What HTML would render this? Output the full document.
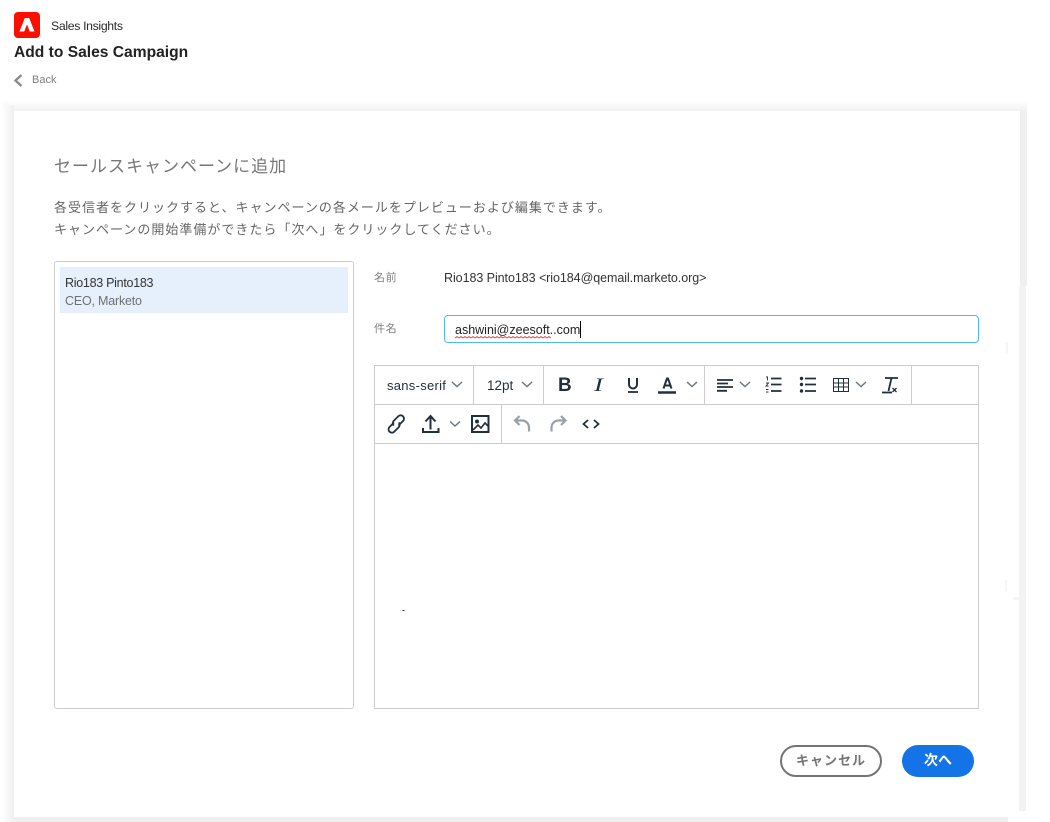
<!DOCTYPE html>
<html><head><meta charset="utf-8">
<style>
html,body{margin:0;padding:0;width:1050px;height:822px;overflow:hidden;background:#fff;font-family:"Liberation Sans","Noto Sans CJK JP",sans-serif}
.a{position:absolute;white-space:nowrap}
svg{position:absolute;overflow:visible;fill:none}
.ln{position:absolute;background:#ccc}
</style></head><body>
<!-- card shadow -->
<div class="a" style="left:2px;top:101px;width:1025px;height:10px;background:linear-gradient(#fff,#f1f1f1)"></div>
<div class="a" style="left:2px;top:105px;width:12px;height:717px;background:linear-gradient(90deg,#fff,#efefef)"></div>
<div class="a" style="left:1020px;top:110px;width:7px;height:176px;background:#f0f0f0"></div>
<div class="a" style="left:1019px;top:286px;width:7px;height:525px;background:#f3f3f3"></div>
<div class="a" style="left:14px;top:817px;width:994px;height:5px;background:#f0f0f0"></div>
<div class="a" style="left:1006px;top:342px;width:2px;height:11px;background:#f5f5f5"></div>
<div class="a" style="left:1005px;top:580px;width:2px;height:11px;background:#f5f5f5"></div>
<div class="a" style="left:1013px;top:597px;width:6px;height:3px;background:#f5f5f5"></div>

<!-- header -->
<div class="a" style="left:14px;top:12px;width:26px;height:26px;background:#fa0f00;border-radius:4px"></div>
<svg style="left:14px;top:12px" width="26" height="26"><path fill-rule="evenodd" d="M10.800 6H15.200L20.500 19.500H5.500ZM13 12.500 10.200 19.500H15.800Z" fill="#fff"/></svg>
<div class="a" style="left:51px;top:18px;font-size:12.300px;line-height:16px;color:#2c2c2c;letter-spacing:-.35px">Sales Insights</div>
<div class="a" style="left:14px;top:43px;font-size:15.600px;line-height:20px;font-weight:bold;color:#222">Add to Sales Campaign</div>
<svg style="left:14px;top:74px" width="10" height="13"><path d="M7.500 1 1.500 6.500 7.500 12" stroke="#8a8a8a" stroke-width="2.300"/></svg>
<div class="a" style="left:32px;top:73px;font-size:11px;line-height:14px;color:#7f7f7f">Back</div>

<!-- headings -->
<div class="a" style="left:54px;top:156px;font-size:17px;line-height:22px;color:#777;letter-spacing:1px">セールスキャンペーンに追加</div>
<div class="a" style="left:54px;top:198px;font-size:13px;line-height:20px;color:#666;letter-spacing:1px">各受信者をクリックすると、キャンペーンの各メールをプレビューおよび編集できます。</div>
<div class="a" style="left:54px;top:220px;font-size:13px;line-height:20px;color:#666;letter-spacing:1px">キャンペーンの開始準備ができたら「次へ」をクリックしてください。</div>

<!-- left list -->
<div class="a" style="left:54px;top:261px;width:298px;height:446px;border:1px solid #ccc;border-radius:3px"></div>
<div class="a" style="left:60px;top:267px;width:288px;height:46px;background:#e5f0fc"></div>
<div class="a" style="left:65px;top:275px;font-size:12.500px;line-height:16px;color:#333;letter-spacing:-.28px">Rio183 Pinto183</div>
<div class="a" style="left:65px;top:293px;font-size:12.500px;line-height:16px;color:#707070;letter-spacing:-.2px">CEO, Marketo</div>

<!-- form -->
<div class="a" style="left:374px;top:270px;font-size:11px;line-height:16px;color:#808080;letter-spacing:.6px">名前</div>
<div class="a" style="left:444px;top:270px;font-size:12.500px;line-height:16px;color:#333;letter-spacing:-.06px">Rio183 Pinto183 &lt;rio184@qemail.marketo.org&gt;</div>
<div class="a" style="left:374px;top:321px;font-size:11px;line-height:16px;color:#808080;letter-spacing:.6px">件名</div>
<div class="a" style="left:444px;top:315px;width:533px;height:26px;border:1px solid #4ebbe9;border-radius:4px"></div>
<div class="a" style="left:455px;top:322px;font-size:12.500px;line-height:16px;color:#222;letter-spacing:0">ashwini@zeesoft..com</div>
<div class="a" style="left:580px;top:321px;width:1px;height:17px;background:#000"></div>
<svg style="left:455px;top:336px" width="96" height="4"><path d="M0 2l2-1.500 2 1.500 2-1.500 2 1.500 2-1.500 2 1.500 2-1.500 2 1.500 2-1.500 2 1.500 2-1.500 2 1.500 2-1.500 2 1.500 2-1.500 2 1.500 2-1.500 2 1.500 2-1.500 2 1.500 2-1.500 2 1.500 2-1.500 2 1.500 2-1.500 2 1.500 2-1.500 2 1.500 2-1.500 2 1.500 2-1.500 2 1.500 2-1.500 2 1.500 2-1.500 2 1.500 2-1.500 2 1.500 2-1.500 2 1.500 2-1.500 2 1.500 2-1.500 2 1.500 2-1.500 2 1.500 2-1.500 2 1.500" stroke="#e0423c" stroke-width=".8"/></svg>

<!-- editor -->
<div class="a" style="left:374px;top:365px;width:603px;height:342px;border:1px solid #ccc"></div>
<div class="ln" style="left:375px;top:404px;width:603px;height:1px"></div>
<div class="ln" style="left:375px;top:443px;width:603px;height:1px"></div>
<div class="ln" style="left:473px;top:366px;width:1px;height:38px"></div>
<div class="ln" style="left:543px;top:366px;width:1px;height:38px"></div>
<div class="ln" style="left:704px;top:366px;width:1px;height:38px"></div>
<div class="ln" style="left:911px;top:366px;width:1px;height:38px"></div>
<div class="ln" style="left:501px;top:405px;width:1px;height:38px"></div>

<div class="a" style="left:387px;top:378px;font-size:13px;line-height:16px;color:#222f3e;letter-spacing:.28px">sans-serif</div>
<div class="a" style="left:487px;top:378px;font-size:13.500px;line-height:16px;color:#222f3e">12pt</div>
<div class="a" style="left:558px;top:375px;font-size:19px;line-height:22px;font-weight:bold;color:#222f3e">B</div>
<div class="a" style="left:594px;top:375px;font-size:19px;line-height:22px;font-style:italic;font-family:'Liberation Serif',serif;color:#222f3e;transform:scaleX(1.400);transform-origin:0 50%">I</div>

<svg style="left:0;top:0" width="1050" height="822">
 <g stroke="#6d7885" stroke-width="1.500">
  <path d="M452 382l5 4.500 5-4.500"/><path d="M522 382l5 4.500 5-4.500"/><path d="M687 382l5 4.500 5-4.500"/><path d="M740 382l5 4.500 5-4.500"/><path d="M856 382l5 4.500 5-4.500"/><path d="M450 421.500l5 4.500 5-4.500"/>
 </g>
 <g stroke="#222f3e" fill="none">
  <path d="M629 378v6.500a4 4 0 0 0 8 0V378" stroke-width="2"/><path d="M628 392h10" stroke-width="1.800"/>
  <path d="M663.500 388.500l3.500-10h1l3.500 10M664.500 385.500h6" stroke-width="2"/><path d="M658 392.500h18" stroke-width="2.500"/>
  <path d="M717 380h16M717 383.500h11M717 387h16M717 390.800h10" stroke-width="1.800"/>
  <path d="M771 378.500h10.500M771 384.500h10.500M771 391h10.500" stroke-width="1.700"/>
  <path d="M766 377h1.500v3.500M766 383h2.500l-2.500 3h2.500M766 389.500h2.500M766 392h2.500" stroke-width=".9"/>
  <path d="M805 378.500h11M805 384.500h11M805 391h11" stroke-width="1.700"/>
  <circle cx="801.500" cy="378.500" r="1.700" fill="#222f3e" stroke="none"/><circle cx="801.500" cy="384.500" r="1.700" fill="#222f3e" stroke="none"/><circle cx="801.500" cy="391" r="1.700" fill="#222f3e" stroke="none"/>
  <path d="M833.500 378.500h15v13h-15ZM833.500 383h15M833.500 387h15M838.500 379v12M843.500 379v12" stroke-width="1"/>
  <path d="M885 378h13M891.500 378l-3 13" stroke-width="1.800"/><path d="M882 392.500h10" stroke-width="1.800"/><path d="M892.500 388l4 4M896.500 388l-4 4" stroke-width="1.300"/>
  <!-- link -->
  <path d="M394 422.500l-4.500 4.500a3.300 3.300 0 0 0 0 4.700 3.300 3.300 0 0 0 4.700 0l4.500-4.500a3.300 3.300 0 0 0 0-4.700M398.500 425.500l4.500-4.500a3.300 3.300 0 0 0 0-4.700 3.300 3.300 0 0 0-4.700 0l-4.500 4.500a3.300 3.300 0 0 0 0 4.700" stroke-width="1.800"/>
  <!-- upload -->
  <path d="M430.500 429.500v-13M425.500 421.500l5-5.500 5 5.500" stroke-width="2"/><path d="M423 428v4h15.500v-4" stroke-width="2"/>
  <!-- image -->
  <path d="M472 416h16.500v16H472Z" stroke-width="2"/><circle cx="477" cy="421.500" r="2" fill="#222f3e" stroke="none"/><path d="M473 430l5-5 3 3 4-5 3 3" stroke-width="1.600"/>
  <!-- code -->
  <path d="M588 420l-4.500 4 4.500 4M594 420l4.500 4-4.500 4" stroke-width="1.800"/>
 </g>
 <g stroke="#98a0a9" stroke-width="2.200" fill="none">
  <path d="M519.500 416l-4.500 4.500 4.500 4.500M515 420.500h7.500a7 7 0 0 1 6.500 7v4"/>
  <path d="M561 416l4.500 4.500-4.500 4.500M565.500 420.500h-7.500a7 7 0 0 0-6.500 7v4"/>
 </g>
 <path d="M402.500 610.500h2" stroke="#333" stroke-width="1"/>
</svg>

<!-- buttons -->
<div class="a" style="left:780px;top:745px;width:98px;height:28px;border:2px solid #747474;border-radius:16px;text-align:center;font-size:13px;line-height:28px;font-weight:bold;color:#747474;letter-spacing:1px">キャンセル</div>
<div class="a" style="left:902px;top:745px;width:72px;height:32px;background:#1473e6;border-radius:16px;text-align:center;font-size:14px;line-height:31px;font-weight:bold;color:#fff">次へ</div>
</body></html>
